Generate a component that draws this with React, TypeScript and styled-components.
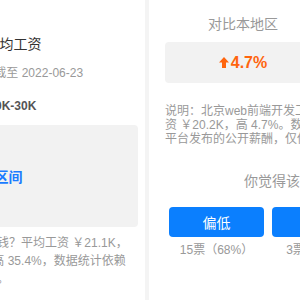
import styled, { createGlobalStyle } from "styled-components";

const GlobalStyle = createGlobalStyle`
  html, body {
    margin: 0;
    padding: 0;
    overflow: hidden;
    background: #f4f4f4;
  }
  body {
    font-family: "Liberation Sans", "Noto Sans CJK SC", sans-serif;
  }
`;

const votes = [
  { label: "偏低", count: "15票（68%）" },
  { label: "合理", count: "3票（14%）" },
  { label: "偏高", count: "4票（18%）" },
];

const UpArrow = () => (
  <svg width="10" height="11" viewBox="0 0 10 11">
    <path d="M5 0 L10 5.5 H7 V11 H3 V5.5 H0 Z" fill="#ff650e" />
  </svg>
);

const App = () => {
  return (
    <>
      <GlobalStyle />
      <SPage>
        <SCard $width={295} $pad="34px 7px 0 15px">
          <STitle>vue前端开发工程师平均工资</STitle>
          <SSub>基于 1328 份样本，统计截至 2022-06-23</SSub>
          <SRange>大多数人的月薪集中在 10K-30K</SRange>
          <SRangeBox>看区间</SRangeBox>
          <SDesc>
            前端开发工程师能赚多少钱？平均工资 ￥21.1K，比全国平均工资￥15.6K高 35.4%，数据统计依赖于各大招聘平台公开数据。
          </SDesc>
        </SCard>
        <SCard $width={358} $pad="14px 16px 0">
          <SCompareRow>
            <SCompareCol>
              <SCompareTitle>对比本地区</SCompareTitle>
              <SCompareBox>
                <UpArrow />
                <SValue>4.7%</SValue>
              </SCompareBox>
            </SCompareCol>
            <SCompareCol>
              <SCompareTitle>对比全国</SCompareTitle>
              <SCompareBox>
                <UpArrow />
                <SValue>35.4%</SValue>
              </SCompareBox>
            </SCompareCol>
          </SCompareRow>
          <SNote>
            说明：北京web前端开发工程师的月平均工资比全国的平均工资 ￥20.2K，高 4.7%。数据统计依赖于BOSS直聘等各招聘平台发布的公开薪酬，仅供参考。
          </SNote>
          <SQuestion>你觉得该薪资水平合理吗？</SQuestion>
          <SVoteRow>
            {votes.map((v) => (
              <SVoteItem key={v.label}>
                <SVoteButton>{v.label}</SVoteButton>
                <SVoteCount>{v.count}</SVoteCount>
              </SVoteItem>
            ))}
          </SVoteRow>
        </SCard>
      </SPage>
    </>
  );
};

const SPage = styled.div`
  display: flex;
  gap: 4px;
  width: max-content;
  height: 300px;
  margin-left: -150px;
`;

const SCard = styled.section<{ $width: number; $pad: string }>`
  display: flex;
  flex-direction: column;
  flex: 0 0 auto;
  box-sizing: border-box;
  width: ${(p) => p.$width}px;
  padding: ${(p) => p.$pad};
  background-color: #fff;
`;

const STitle = styled.h2`
  margin: 0;
  font-size: 14px;
  font-weight: normal;
  line-height: 20px;
  color: #333;
  white-space: nowrap;
`;

const SSub = styled.div`
  margin-top: 10px;
  font-size: 12px;
  line-height: 18px;
  color: #999;
  white-space: nowrap;
`;

const SRange = styled.div`
  margin-top: 15px;
  font-size: 12px;
  font-weight: bold;
  line-height: 18px;
  color: #555;
  white-space: nowrap;
`;

const SRangeBox = styled.div`
  display: flex;
  justify-content: center;
  align-items: center;
  height: 102px;
  margin-top: 10px;
  border-radius: 4px;
  background-color: #f2f2f2;
  color: #1a7cff;
  font-size: 14px;
  font-weight: bold;
`;

const SDesc = styled.p`
  margin: 7px 8px 0 0;
  font-size: 12px;
  line-height: 18px;
  color: #999;
`;

const SCompareRow = styled.div`
  display: grid;
  grid-template-columns: 1fr 1fr;
  gap: 14px;
`;

const SCompareCol = styled.div`
  display: flex;
  flex-direction: column;
`;

const SCompareTitle = styled.div`
  font-size: 14px;
  line-height: 20px;
  text-align: center;
  color: #999;
`;

const SCompareBox = styled.div`
  display: flex;
  justify-content: center;
  align-items: center;
  gap: 2px;
  height: 41px;
  margin-top: 8px;
  border-radius: 4px;
  background-color: #f2f2f2;
`;

const SValue = styled.span`
  font-size: 16px;
  font-weight: bold;
  color: #ff650e;
`;

const SNote = styled.p`
  margin: 21px 0 0;
  font-size: 12px;
  line-height: 14px;
  color: #999;
`;

const SQuestion = styled.div`
  margin-top: 25px;
  font-size: 14px;
  line-height: 20px;
  text-align: center;
  color: #999;
`;

const SVoteRow = styled.div`
  display: flex;
  gap: 8px;
  margin-top: 16px;
  padding: 0 4px;
`;

const SVoteItem = styled.div`
  display: flex;
  flex-direction: column;
  align-items: center;
  flex: 0 0 95px;
`;

const SVoteButton = styled.button`
  width: 100%;
  height: 30px;
  padding: 0;
  border: none;
  border-radius: 4px;
  background-color: #0b7ffe;
  color: #fff;
  font-family: inherit;
  font-size: 14px;
  cursor: pointer;
`;

const SVoteCount = styled.div`
  margin-top: 5px;
  font-size: 12px;
  line-height: 16px;
  color: #999;
  white-space: nowrap;
`;

export default App;
